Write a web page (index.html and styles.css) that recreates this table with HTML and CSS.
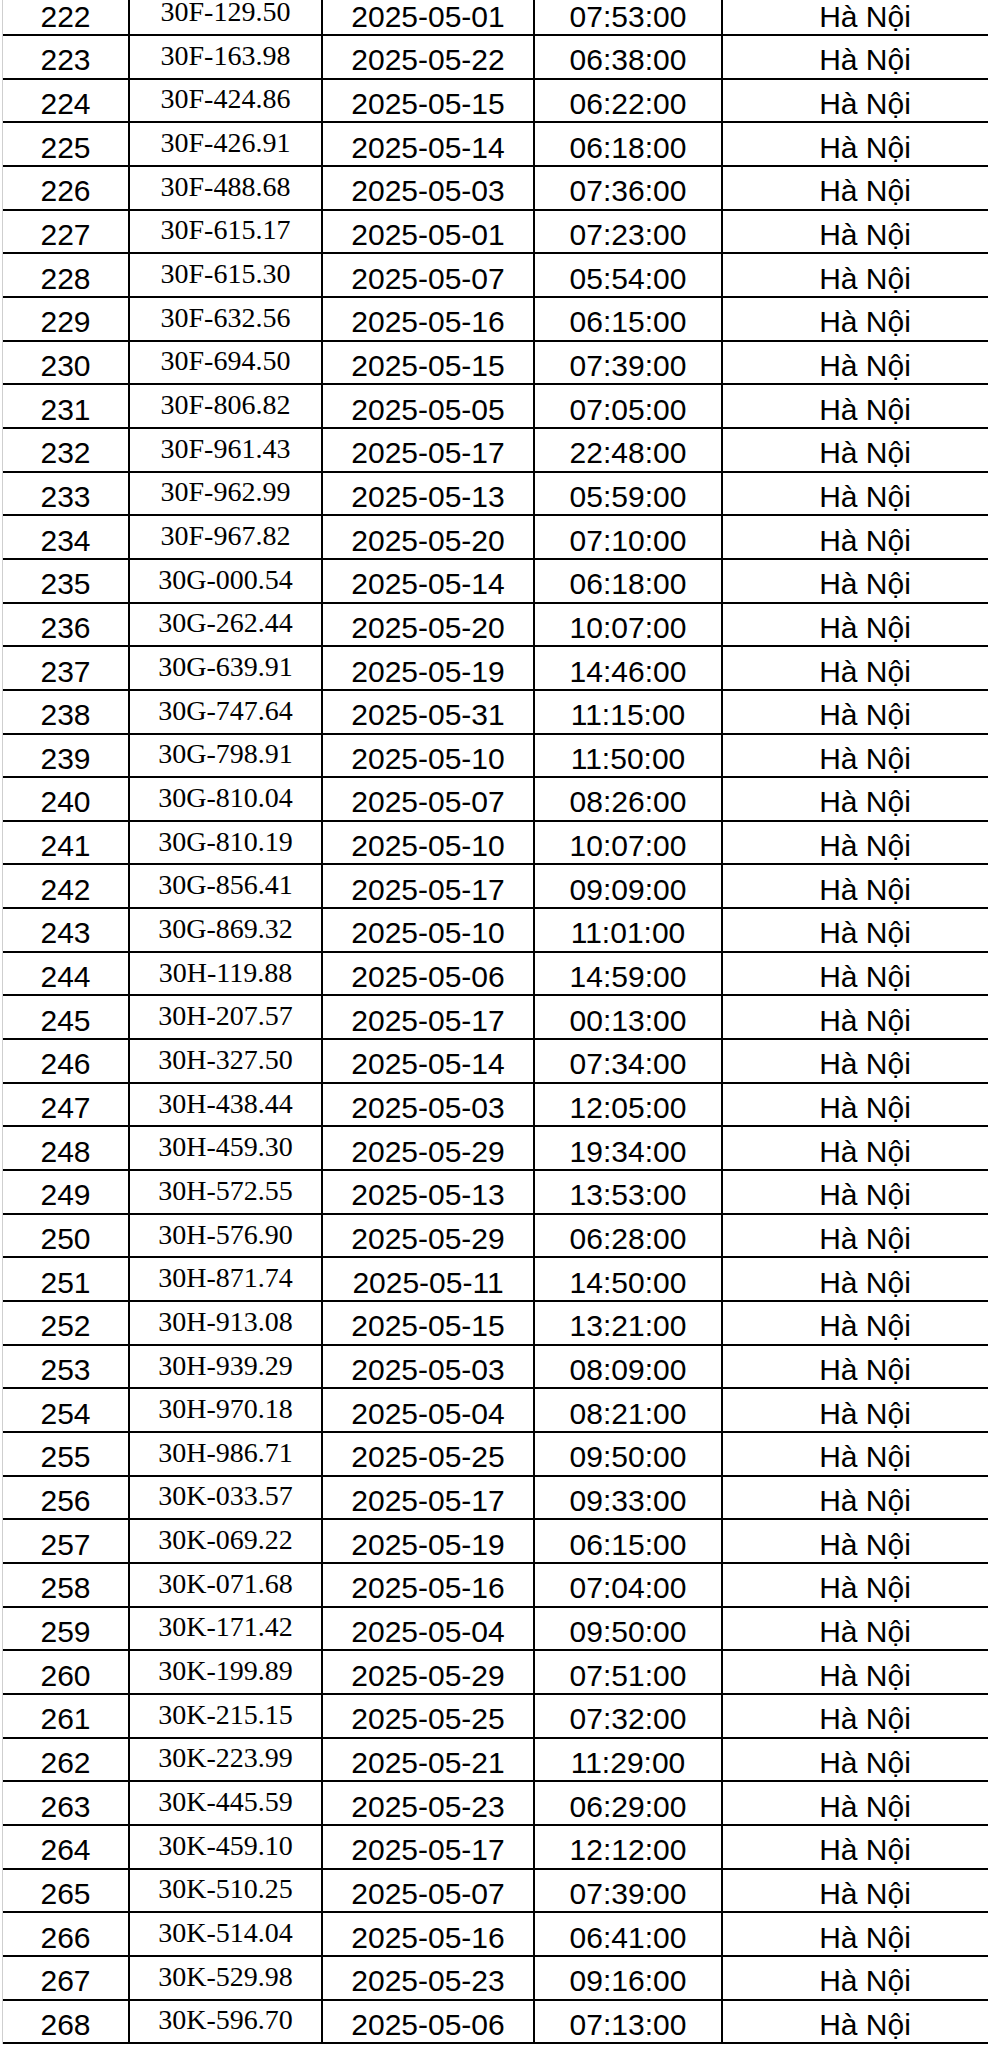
FILE: index.html
```html
<!DOCTYPE html>
<html lang="vi">
<head>
<meta charset="utf-8">
<title>Danh sách</title>
<link rel="stylesheet" href="styles.css">
</head>
<body>
<div class="sheet">
<div class="table">
<div class="row"><div class="c n">222</div><div class="c p">30F-129.50</div><div class="c d">2025-05-01</div><div class="c t">07:53:00</div><div class="c l">Hà Nội</div></div>
<div class="row"><div class="c n">223</div><div class="c p">30F-163.98</div><div class="c d">2025-05-22</div><div class="c t">06:38:00</div><div class="c l">Hà Nội</div></div>
<div class="row"><div class="c n">224</div><div class="c p">30F-424.86</div><div class="c d">2025-05-15</div><div class="c t">06:22:00</div><div class="c l">Hà Nội</div></div>
<div class="row"><div class="c n">225</div><div class="c p">30F-426.91</div><div class="c d">2025-05-14</div><div class="c t">06:18:00</div><div class="c l">Hà Nội</div></div>
<div class="row"><div class="c n">226</div><div class="c p">30F-488.68</div><div class="c d">2025-05-03</div><div class="c t">07:36:00</div><div class="c l">Hà Nội</div></div>
<div class="row"><div class="c n">227</div><div class="c p">30F-615.17</div><div class="c d">2025-05-01</div><div class="c t">07:23:00</div><div class="c l">Hà Nội</div></div>
<div class="row"><div class="c n">228</div><div class="c p">30F-615.30</div><div class="c d">2025-05-07</div><div class="c t">05:54:00</div><div class="c l">Hà Nội</div></div>
<div class="row"><div class="c n">229</div><div class="c p">30F-632.56</div><div class="c d">2025-05-16</div><div class="c t">06:15:00</div><div class="c l">Hà Nội</div></div>
<div class="row"><div class="c n">230</div><div class="c p">30F-694.50</div><div class="c d">2025-05-15</div><div class="c t">07:39:00</div><div class="c l">Hà Nội</div></div>
<div class="row"><div class="c n">231</div><div class="c p">30F-806.82</div><div class="c d">2025-05-05</div><div class="c t">07:05:00</div><div class="c l">Hà Nội</div></div>
<div class="row"><div class="c n">232</div><div class="c p">30F-961.43</div><div class="c d">2025-05-17</div><div class="c t">22:48:00</div><div class="c l">Hà Nội</div></div>
<div class="row"><div class="c n">233</div><div class="c p">30F-962.99</div><div class="c d">2025-05-13</div><div class="c t">05:59:00</div><div class="c l">Hà Nội</div></div>
<div class="row"><div class="c n">234</div><div class="c p">30F-967.82</div><div class="c d">2025-05-20</div><div class="c t">07:10:00</div><div class="c l">Hà Nội</div></div>
<div class="row"><div class="c n">235</div><div class="c p">30G-000.54</div><div class="c d">2025-05-14</div><div class="c t">06:18:00</div><div class="c l">Hà Nội</div></div>
<div class="row"><div class="c n">236</div><div class="c p">30G-262.44</div><div class="c d">2025-05-20</div><div class="c t">10:07:00</div><div class="c l">Hà Nội</div></div>
<div class="row"><div class="c n">237</div><div class="c p">30G-639.91</div><div class="c d">2025-05-19</div><div class="c t">14:46:00</div><div class="c l">Hà Nội</div></div>
<div class="row"><div class="c n">238</div><div class="c p">30G-747.64</div><div class="c d">2025-05-31</div><div class="c t">11:15:00</div><div class="c l">Hà Nội</div></div>
<div class="row"><div class="c n">239</div><div class="c p">30G-798.91</div><div class="c d">2025-05-10</div><div class="c t">11:50:00</div><div class="c l">Hà Nội</div></div>
<div class="row"><div class="c n">240</div><div class="c p">30G-810.04</div><div class="c d">2025-05-07</div><div class="c t">08:26:00</div><div class="c l">Hà Nội</div></div>
<div class="row"><div class="c n">241</div><div class="c p">30G-810.19</div><div class="c d">2025-05-10</div><div class="c t">10:07:00</div><div class="c l">Hà Nội</div></div>
<div class="row"><div class="c n">242</div><div class="c p">30G-856.41</div><div class="c d">2025-05-17</div><div class="c t">09:09:00</div><div class="c l">Hà Nội</div></div>
<div class="row"><div class="c n">243</div><div class="c p">30G-869.32</div><div class="c d">2025-05-10</div><div class="c t">11:01:00</div><div class="c l">Hà Nội</div></div>
<div class="row"><div class="c n">244</div><div class="c p">30H-119.88</div><div class="c d">2025-05-06</div><div class="c t">14:59:00</div><div class="c l">Hà Nội</div></div>
<div class="row"><div class="c n">245</div><div class="c p">30H-207.57</div><div class="c d">2025-05-17</div><div class="c t">00:13:00</div><div class="c l">Hà Nội</div></div>
<div class="row"><div class="c n">246</div><div class="c p">30H-327.50</div><div class="c d">2025-05-14</div><div class="c t">07:34:00</div><div class="c l">Hà Nội</div></div>
<div class="row"><div class="c n">247</div><div class="c p">30H-438.44</div><div class="c d">2025-05-03</div><div class="c t">12:05:00</div><div class="c l">Hà Nội</div></div>
<div class="row"><div class="c n">248</div><div class="c p">30H-459.30</div><div class="c d">2025-05-29</div><div class="c t">19:34:00</div><div class="c l">Hà Nội</div></div>
<div class="row"><div class="c n">249</div><div class="c p">30H-572.55</div><div class="c d">2025-05-13</div><div class="c t">13:53:00</div><div class="c l">Hà Nội</div></div>
<div class="row"><div class="c n">250</div><div class="c p">30H-576.90</div><div class="c d">2025-05-29</div><div class="c t">06:28:00</div><div class="c l">Hà Nội</div></div>
<div class="row"><div class="c n">251</div><div class="c p">30H-871.74</div><div class="c d">2025-05-11</div><div class="c t">14:50:00</div><div class="c l">Hà Nội</div></div>
<div class="row"><div class="c n">252</div><div class="c p">30H-913.08</div><div class="c d">2025-05-15</div><div class="c t">13:21:00</div><div class="c l">Hà Nội</div></div>
<div class="row"><div class="c n">253</div><div class="c p">30H-939.29</div><div class="c d">2025-05-03</div><div class="c t">08:09:00</div><div class="c l">Hà Nội</div></div>
<div class="row"><div class="c n">254</div><div class="c p">30H-970.18</div><div class="c d">2025-05-04</div><div class="c t">08:21:00</div><div class="c l">Hà Nội</div></div>
<div class="row"><div class="c n">255</div><div class="c p">30H-986.71</div><div class="c d">2025-05-25</div><div class="c t">09:50:00</div><div class="c l">Hà Nội</div></div>
<div class="row"><div class="c n">256</div><div class="c p">30K-033.57</div><div class="c d">2025-05-17</div><div class="c t">09:33:00</div><div class="c l">Hà Nội</div></div>
<div class="row"><div class="c n">257</div><div class="c p">30K-069.22</div><div class="c d">2025-05-19</div><div class="c t">06:15:00</div><div class="c l">Hà Nội</div></div>
<div class="row"><div class="c n">258</div><div class="c p">30K-071.68</div><div class="c d">2025-05-16</div><div class="c t">07:04:00</div><div class="c l">Hà Nội</div></div>
<div class="row"><div class="c n">259</div><div class="c p">30K-171.42</div><div class="c d">2025-05-04</div><div class="c t">09:50:00</div><div class="c l">Hà Nội</div></div>
<div class="row"><div class="c n">260</div><div class="c p">30K-199.89</div><div class="c d">2025-05-29</div><div class="c t">07:51:00</div><div class="c l">Hà Nội</div></div>
<div class="row"><div class="c n">261</div><div class="c p">30K-215.15</div><div class="c d">2025-05-25</div><div class="c t">07:32:00</div><div class="c l">Hà Nội</div></div>
<div class="row"><div class="c n">262</div><div class="c p">30K-223.99</div><div class="c d">2025-05-21</div><div class="c t">11:29:00</div><div class="c l">Hà Nội</div></div>
<div class="row"><div class="c n">263</div><div class="c p">30K-445.59</div><div class="c d">2025-05-23</div><div class="c t">06:29:00</div><div class="c l">Hà Nội</div></div>
<div class="row"><div class="c n">264</div><div class="c p">30K-459.10</div><div class="c d">2025-05-17</div><div class="c t">12:12:00</div><div class="c l">Hà Nội</div></div>
<div class="row"><div class="c n">265</div><div class="c p">30K-510.25</div><div class="c d">2025-05-07</div><div class="c t">07:39:00</div><div class="c l">Hà Nội</div></div>
<div class="row"><div class="c n">266</div><div class="c p">30K-514.04</div><div class="c d">2025-05-16</div><div class="c t">06:41:00</div><div class="c l">Hà Nội</div></div>
<div class="row"><div class="c n">267</div><div class="c p">30K-529.98</div><div class="c d">2025-05-23</div><div class="c t">09:16:00</div><div class="c l">Hà Nội</div></div>
<div class="row"><div class="c n">268</div><div class="c p">30K-596.70</div><div class="c d">2025-05-06</div><div class="c t">07:13:00</div><div class="c l">Hà Nội</div></div>
</div>
</div>
</body>
</html>
```

FILE: styles.css
```css
html, body {
  margin: 0;
  padding: 0;
  background: #ffffff;
}

body {
  width: 988px;
  height: 2045px;
  overflow: hidden;
  color: #000000;
  font-family: "Liberation Sans", Arial, sans-serif;
}

.sheet {
  margin-left: 2px;
  border-left: 1px solid #cfcfcf;
  margin-top: -7.67px;
}

.table {
  width: 1004px;
}

.row {
  display: flex;
  height: 43.67px;
  box-sizing: border-box;
  border-bottom: 2px solid #000000;
}

.c {
  display: flex;
  align-items: center;
  justify-content: center;
  box-sizing: border-box;
  border-right: 2px solid #000000;
  font-size: 30px;
  line-height: 34px;
  padding-top: 7px;
  white-space: nowrap;
  flex: none;
}

.n { width: 127px; }
.p {
  width: 193px;
  font-family: "Liberation Serif", "Times New Roman", serif;
  font-size: 28px;
  padding-top: 0;
  padding-bottom: 2px;
}
.d { width: 212px; }
.t { width: 188px; }
.l { width: 284px; border-right: none; }
```
